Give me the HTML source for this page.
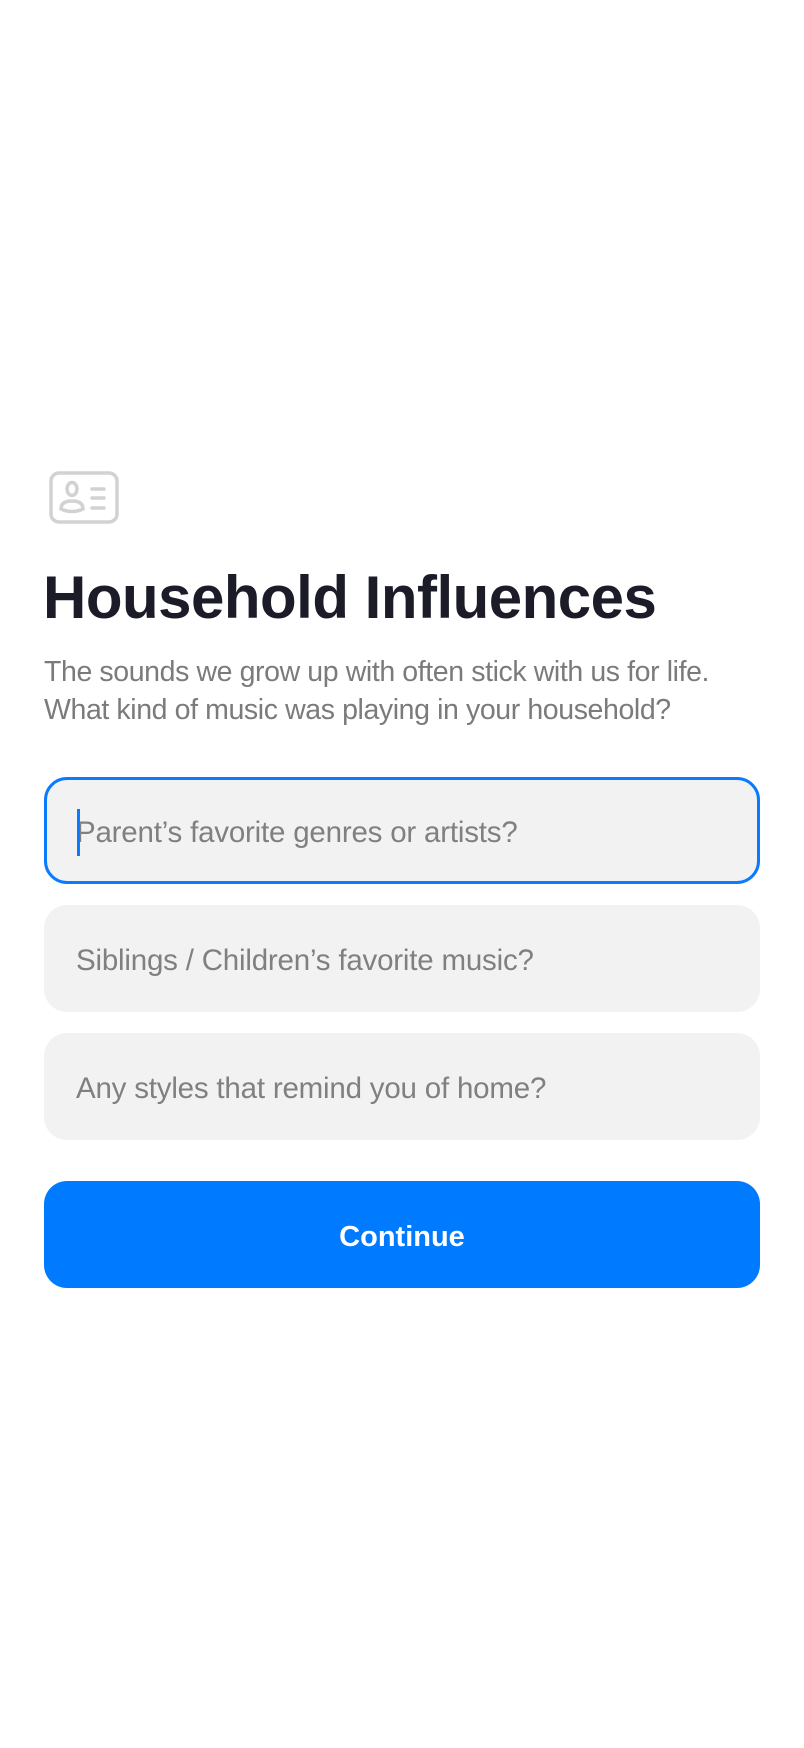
<!DOCTYPE html>
<html><head><meta charset="utf-8"><style>
*{margin:0;padding:0;box-sizing:border-box}
body{width:804px;height:1748px;background:#fff;font-family:"Liberation Sans",sans-serif;position:relative;overflow:hidden}
.icon{position:absolute;left:49px;top:471px}
h1{position:absolute;left:43px;top:563px;font-size:60px;font-weight:bold;color:#1b1c28;letter-spacing:-0.5px;line-height:70px;white-space:nowrap}
.sub{position:absolute;left:44px;top:653px;font-size:28.5px;line-height:38px;color:#7b7b7b;letter-spacing:-0.4px;white-space:nowrap}
.in{position:absolute;left:44px;width:716px;height:107px;background:#f2f2f2;border-radius:23px;font-size:29.5px;color:#808080;padding-left:32px;line-height:111px;letter-spacing:-0.2px}
.in.f{border:3px solid #0a7afe;padding-left:29px;line-height:105px}
.cur{position:absolute;left:30px;top:29px;width:3px;height:47px;background:#0a7afe}
.btn{position:absolute;left:44px;top:1181px;width:716px;height:107px;background:#007aff;border-radius:23px;color:#fff;font-size:29px;font-weight:bold;text-align:center;line-height:112px}
</style></head><body>
<svg class="icon" width="70" height="53" viewBox="0 0 70 53" fill="none" stroke="#d2d2d2" stroke-width="3.5" stroke-linecap="round">
<rect x="2" y="2" width="66" height="49" rx="8"/>
<ellipse cx="23" cy="18" rx="5" ry="6.5"/>
<path d="M12 38 Q12 30 23 30 Q34 30 34 38 Q23 43 12 38Z"/>
<path d="M43 18H55M43 27H55M43 37H55"/>
</svg>
<h1>Household Influences</h1>
<div class="sub">The sounds we grow up with often stick with us for life.<br>What kind of music was playing in your household?</div>
<div class="in f" style="top:777px"><div class="cur"></div>Parent’s favorite genres or artists?</div>
<div class="in" style="top:905px">Siblings / Children’s favorite music?</div>
<div class="in" style="top:1033px">Any styles that remind you of home?</div>
<div class="btn">Continue</div>
</body></html>
